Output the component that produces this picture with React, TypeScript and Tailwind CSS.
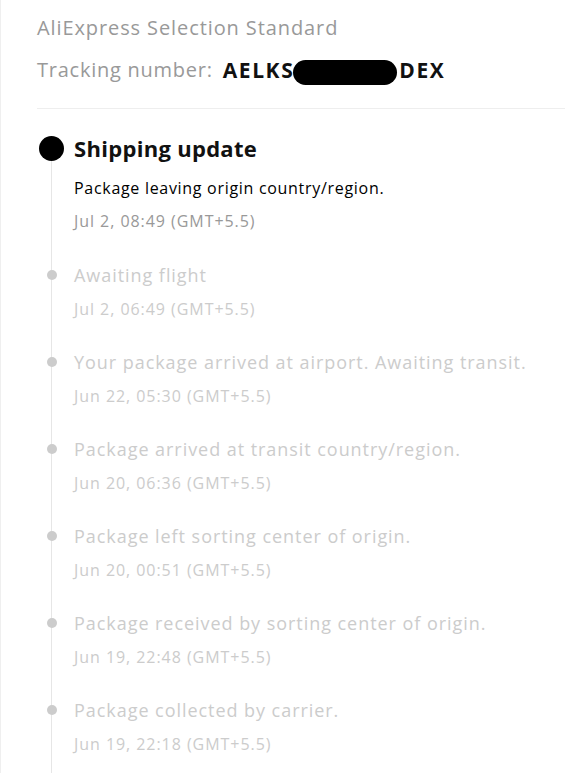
const events = [
  { title: "Awaiting flight", time: "Jul 2, 06:49 (GMT+5.5)" },
  { title: "Your package arrived at airport. Awaiting transit.", time: "Jun 22, 05:30 (GMT+5.5)" },
  { title: "Package arrived at transit country/region.", time: "Jun 20, 06:36 (GMT+5.5)" },
  { title: "Package left sorting center of origin.", time: "Jun 20, 00:51 (GMT+5.5)" },
  { title: "Package received by sorting center of origin.", time: "Jun 19, 22:48 (GMT+5.5)" },
  { title: "Package collected by carrier.", time: "Jun 19, 22:18 (GMT+5.5)" },
];

const App = () => {
  return (
    <div className="h-[773px] w-[565px] overflow-hidden border-l border-[#efefef] bg-white pl-[36px] font-['Open_Sans',sans-serif]">
      {/* HEADER */}
      <div className="border-b border-[#eeeeee] pb-[24px] pt-[14px]">
        <p className="text-[20px] leading-[28px] tracking-[0.9px] text-[#999999]">AliExpress Selection Standard</p>
        <p className="mt-[14px] flex h-[28px] items-center text-[20px] leading-[28px]">
          <span className="tracking-[0.75px] text-[#999999]">Tracking number:</span>
          <span className="ml-[10px] flex items-center text-[21px] font-bold tracking-[1.6px] text-[#111111]">
            AELKS
            <span className="-ml-[1px] inline-block h-[25px] w-[104px] translate-y-[2px] rounded-[13px] bg-black" />
            <span className="ml-[2px]">DEX</span>
          </span>
        </p>
      </div>

      {/* TIMELINE */}
      <div className="relative mt-[25px]">
        <div className="absolute left-[14px] top-[14px] h-[700px] w-px bg-[#e6e6e6]" />

        {/* CURRENT */}
        <div className="relative flex">
          <div className="flex w-[37px] shrink-0 pl-[2px] pt-[2px]">
            <span className="h-[25px] w-[25px] rounded-full bg-black" />
          </div>
          <div>
            <p className="text-[22px] font-bold leading-[28px] tracking-[0.3px] text-[#111111]">Shipping update</p>
            <p className="mt-[15px] text-[16px] leading-[22px] tracking-[0.7px] text-black">Package leaving origin country/region.</p>
            <p className="mt-[11px] text-[16px] leading-[22px] tracking-[0.95px] text-[#999999]">Jul 2, 08:49 (GMT+5.5)</p>
          </div>
        </div>

        {/* PAST EVENTS */}
        <div className="mt-[30px] flex flex-col gap-[29px]">
          {events.map((e) => (
            <div key={e.time} className="relative flex">
              <div className="flex w-[37px] shrink-0 pl-[10px] pt-[8px]">
                <span className="h-[10px] w-[10px] rounded-full bg-[#cccccc]" />
              </div>
              <div>
                <p className="text-[18px] leading-[26px] tracking-[0.95px] text-[#cccccc]">{e.title}</p>
                <p className="mt-[10px] text-[16px] leading-[22px] tracking-[0.95px] text-[#cccccc]">{e.time}</p>
              </div>
            </div>
          ))}
        </div>
      </div>
    </div>
  );
};

export default App;
